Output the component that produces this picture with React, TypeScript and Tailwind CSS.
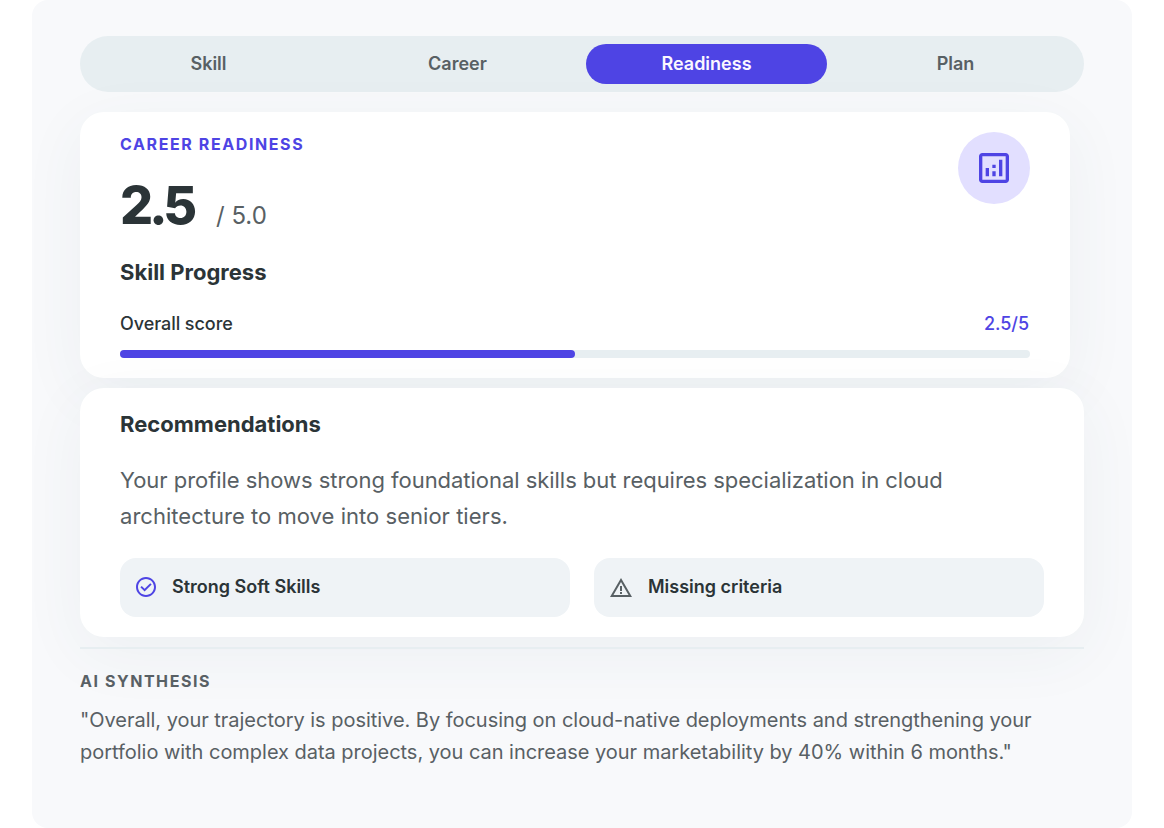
import React from 'react';
import { MdOutlineAnalytics } from 'react-icons/md';

interface TabItem {
  label: string;
  active?: boolean;
}

const tabs: TabItem[] = [
  { label: 'Skill' },
  { label: 'Career' },
  { label: 'Readiness', active: true },
  { label: 'Plan' },
];

const score = 2.5;
const maxScore = 5;

const CheckIcon: React.FC = () => (
  <svg className="w-5 h-5 shrink-0 text-[#4e44e4]" viewBox="2 2 20 20" fill="currentColor">
    <path d="M10.6 16.6l7.05-7.05-1.4-1.4-5.65 5.65-2.85-2.85-1.4 1.4 4.25 4.25zM12 2C6.48 2 2 6.48 2 12s4.48 10 10 10 10-4.48 10-10S17.52 2 12 2zm0 18c-4.41 0-8-3.59-8-8s3.59-8 8-8 8 3.59 8 8-3.59 8-8 8z" />
  </svg>
);

const WarningIcon: React.FC = () => (
  <svg className="w-[22px] h-[19px] shrink-0 text-[#586064]" viewBox="1 2 22 19" fill="currentColor">
    <path d="M1 21 12 2l11 19H1zm3.45-2h15.1L12 6 4.45 19zM11 16h2v2h-2v-2zm0-6h2v5h-2v-5z" />
  </svg>
);

const Tabs: React.FC = () => (
  <div className="grid grid-cols-4 gap-2 h-14 p-2 rounded-full bg-[#e7eef1]">
    {tabs.map((tab) => (
      <button
        key={tab.label}
        className={
          tab.active
            ? 'rounded-full bg-[#4e44e4] text-[#fbf7ff] text-lg leading-10 font-semibold'
            : 'rounded-full text-[#586064] text-lg leading-10 font-semibold'
        }
      >
        {tab.label}
      </button>
    ))}
  </div>
);

const ReadinessCard: React.FC = () => (
  <div className="mt-5 mr-3.5 h-[266px] px-10 pt-5 rounded-3xl bg-white shadow-[0_16px_64px_rgba(55,85,95,0.06)]">
    <div className="flex justify-between items-start h-[100px]">
      <div>
        <p className="text-base leading-6 font-bold tracking-[1.6px] text-[#4e44e4]">CAREER READINESS</p>
        <div className="flex items-baseline mt-[18px]">
          <span className="w-24 text-[52px] leading-[64px] font-extrabold tracking-[-4px] text-[#2b3437]">2.5</span>
          <span className="text-2xl text-[#586064]">/ 5.0</span>
        </div>
      </div>
      <div className="flex items-center justify-center w-[72px] h-[72px] rounded-full bg-[#e2dfff]">
        <MdOutlineAnalytics className="w-10 h-10 text-[#4e44e4]" />
      </div>
    </div>
    <h2 className="mt-6 text-[22px] leading-8 font-bold text-[#2b3437]">Skill Progress</h2>
    <div className="flex justify-between mt-[22px] text-lg leading-7 font-medium tracking-[-0.06px]">
      <span className="text-[#2b3437]">Overall score</span>
      <span className="mr-px text-[#4e44e4]">2.5/5</span>
    </div>
    <div className="mt-3 h-2 rounded-full bg-[#e7eef1]">
      <div className="h-2 rounded-full bg-[#4e44e4]" style={{ width: `${(score / maxScore) * 100}%` }} />
    </div>
  </div>
);

const RecommendationsCard: React.FC = () => (
  <div className="mt-2.5 h-[249px] px-10 pt-5 rounded-3xl bg-white shadow-[0_16px_64px_rgba(55,85,95,0.06)]">
    <h2 className="text-[22px] leading-8 font-bold text-[#2b3437]">Recommendations</h2>
    <p className="mt-[22px] text-[22px] leading-9 text-[#586064]">
      <span className="block tracking-[-0.04px]">
        Your profile shows strong foundational skills but requires specialization in cloud
      </span>
      <span className="block tracking-[0.03px]">architecture to move into senior tiers.</span>
    </p>
    <div className="flex gap-6 mt-6">
      <div className="flex items-center gap-4 w-[450px] h-[59px] px-4 pb-px rounded-2xl bg-[#eff3f6]">
        <CheckIcon />
        <span className="text-lg font-semibold text-[#2b3437]">Strong Soft Skills</span>
      </div>
      <div className="flex items-center gap-4 w-[450px] h-[59px] px-4 pb-px rounded-2xl bg-[#eff3f6]">
        <WarningIcon />
        <span className="text-lg font-semibold text-[#2b3437]">Missing criteria</span>
      </div>
    </div>
  </div>
);

export default function App() {
  return (
    <div className="h-[828px] px-8 bg-white font-['Inter',sans-serif]">
      <main className="h-full px-12 pt-9 overflow-hidden rounded-2xl bg-[#f8f9fb]">
        <Tabs />
        <ReadinessCard />
        <RecommendationsCard />
        <section className="relative mt-2.5 pt-5 border-t-2 border-[#e7eef1]">
          <h3 className="text-base leading-6 font-bold tracking-[1.55px] text-[#586064]">AI SYNTHESIS</h3>
          <p className="mt-[11px] text-xl leading-8 tracking-[-0.03px] text-[#586064]">
            "Overall, your trajectory is positive. By focusing on cloud-native deployments and strengthening your
            <br />
            portfolio with complex data projects, you can increase your marketability by 40% within 6 months."
          </p>
        </section>
      </main>
    </div>
  );
}
